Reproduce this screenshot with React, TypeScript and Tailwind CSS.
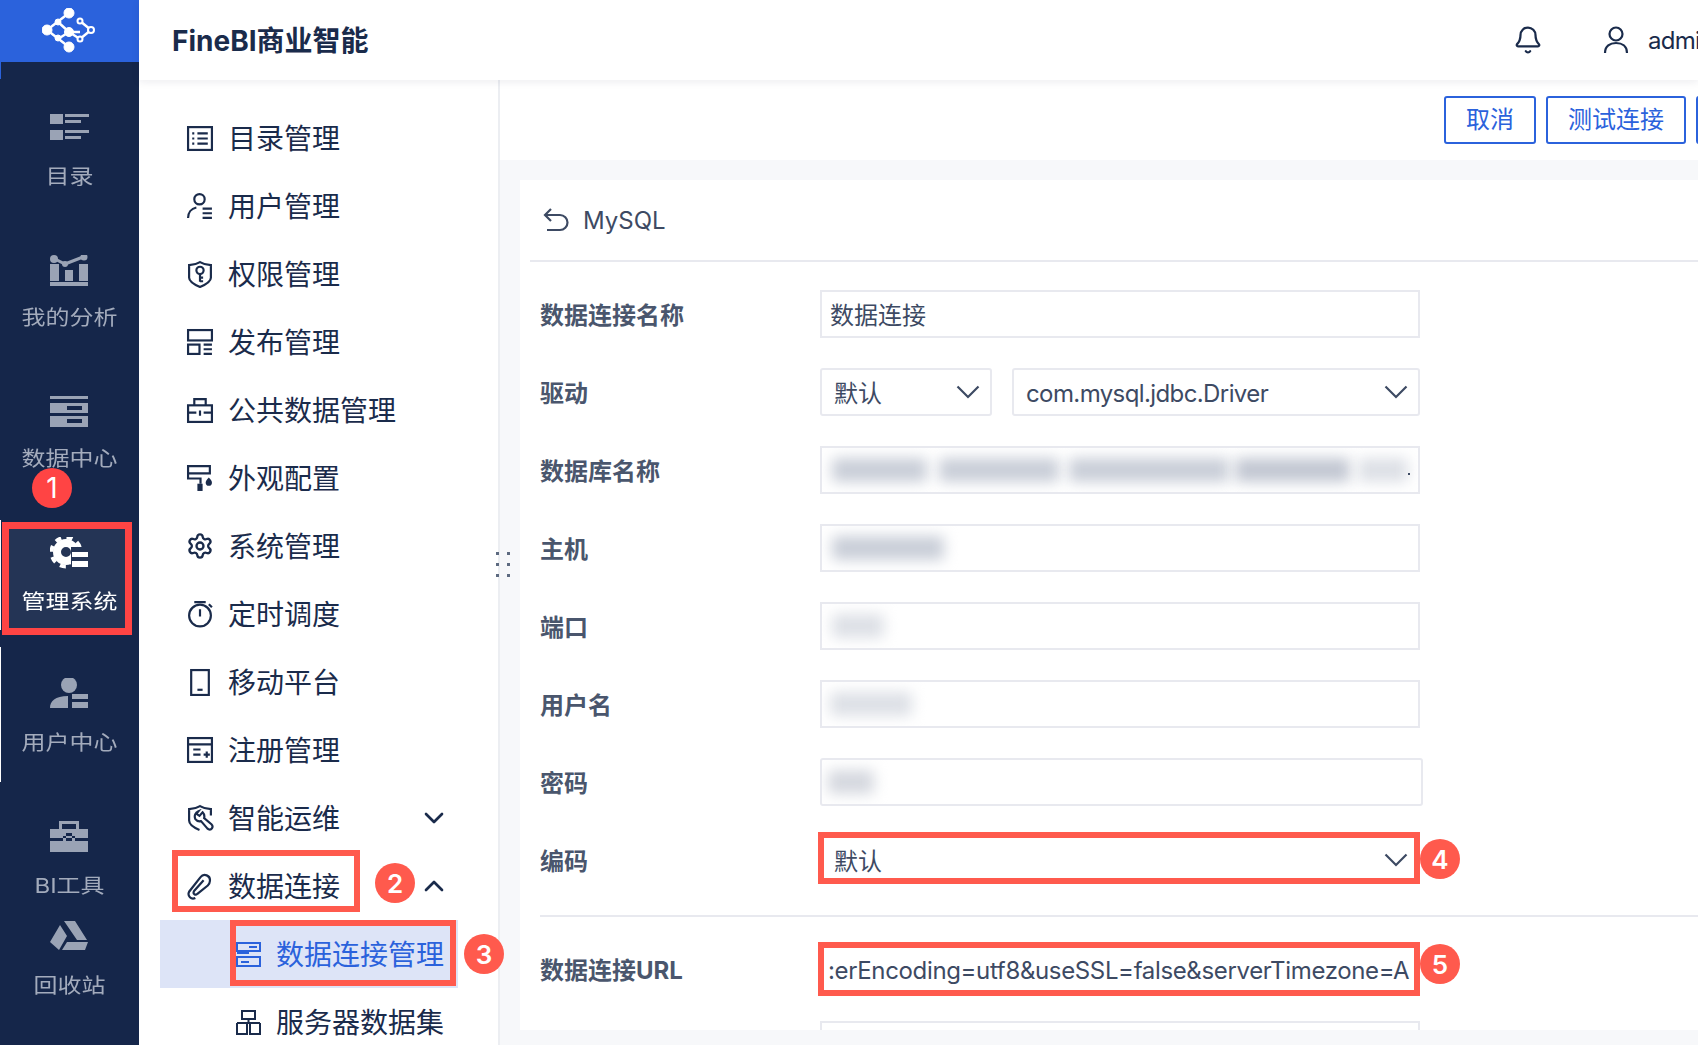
import type { ReactNode } from "react";
import { Bell, ChevronDown, ChevronUp, Settings } from "lucide-react";

const INK = "#1a2b4b";

function Ico({ children }: { children: ReactNode }) {
  return (
    <svg width="28" height="28" viewBox="0 0 27 27" fill="none" stroke={INK} strokeWidth="2.100" className="shrink-0">
      {children}
    </svg>
  );
}

const menu: { label: string; icon: ReactNode }[] = [
  {
    label: "目录管理",
    icon: (
      <Ico>
        <rect x="2" y="3" width="23" height="22" />
        <path d="M6 9h2M11 9h10M6 14h2M11 14h10M6 19h2M11 19h10" />
      </Ico>
    ),
  },
  {
    label: "用户管理",
    icon: (
      <Ico>
        <circle cx="13" cy="7" r="5" />
        <path d="M2 25c0-5 3-9 8-10M16 16h9M16 20.500h9M16 25h9" />
      </Ico>
    ),
  },
  {
    label: "权限管理",
    icon: (
      <Ico>
        <path d="M3 5c4 0 7-1 10.500-3 3.500 2 6.500 3 10.500 3v12c0 4-6 7-10.500 9C9 24 3 21 3 17z" />
        <circle cx="13.500" cy="10" r="3.500" />
        <path d="M13.500 13.500V21M13.500 17h3M13.500 20.500h3" />
      </Ico>
    ),
  },
  {
    label: "发布管理",
    icon: (
      <Ico>
        <rect x="2" y="2" width="23" height="10" />
        <rect x="2" y="16" width="11" height="9" />
        <path d="M17 16h8M17 20.500h8M17 25h8" />
      </Ico>
    ),
  },
  {
    label: "公共数据管理",
    icon: (
      <Ico>
        <rect x="2" y="9" width="23" height="16" />
        <path d="M8 9V3h11v6M2 16h8M17 16h8M13.500 14v5" />
      </Ico>
    ),
  },
  {
    label: "外观配置",
    icon: (
      <Ico>
        <path d="M2 11V2h21v7H2M2 11v3h12v5" />
        <rect x="11" y="19" width="5" height="7" fill={INK} stroke="none" />
        <path d="M22 13c2 2 3 3.500 3 5a3 3 0 0 1-6 0c0-1.500 1-3 3-5z" fill={INK} stroke="none" />
      </Ico>
    ),
  },
  { label: "系统管理", icon: <Settings size={28} color={INK} strokeWidth={2} className="shrink-0" /> },
  {
    label: "定时调度",
    icon: (
      <Ico>
        <circle cx="13.500" cy="15" r="10.500" />
        <path d="M13.500 9v7M8 2h11M22 4l3 3" />
      </Ico>
    ),
  },
  {
    label: "移动平台",
    icon: (
      <Ico>
        <rect x="5" y="2" width="17" height="24" />
        <path d="M11 21h5" />
      </Ico>
    ),
  },
  {
    label: "注册管理",
    icon: (
      <Ico>
        <rect x="2" y="2" width="23" height="23" />
        <path d="M2 8h23M7 13h7M7 18h7M17 18h6M20 15v6" />
      </Ico>
    ),
  },
  {
    label: "智能运维",
    icon: (
      <Ico>
        <path d="M24 11V5c-4 0-7-1-10.500-3C10 4 7 5 3 5v11c0 4 5 7 10 9" />
        <path d="M12 7a5.500 5.500 0 0 0-3 7.500c1.500 2 3.500 2.500 5.500 2l6 7c1.500 1.500 3.500 1.500 4.500 0s.5-3-.5-4l-7-6c.5-2 0-4-1.500-5.500l-3 3.500-3-2z" />
      </Ico>
    ),
  },
];

const rail: { label: string; icon: ReactNode; h: string; mt: string }[] = [
  {
    label: "目录",
    h: "h-[141px]",
    mt: "mt-[16px]",
    icon: (
      <path d="M0 0h13v10H0zM15 0h24v3H15zM15 6h16v3H15zM0 16h13v10H0zM15 16h24v3H15zM15 22h16v3H15z" />
    ),
  },
  {
    label: "我的分析",
    h: "h-[141px]",
    mt: "mt-[16px]",
    icon: (
      <>
        <path d="M3 3l12 6 18-7" fill="none" stroke="#9aa3b5" strokeWidth="3" />
        <circle cx="4" cy="4" r="4" />
        <circle cx="15" cy="9" r="3" />
        <circle cx="34" cy="2" r="3.500" />
        <path d="M0 9h9v17H0zM15 15h8v11h-8zM29 9h9v17h-9zM0 27h38v4H0z" />
      </>
    ),
  },
  {
    label: "数据中心",
    h: "h-[141px]",
    mt: "mt-[16px]",
    icon: <path d="M0 0h38v3H0zM0 7h38v10H0zM0 20h38v11H0z M17 10v4h15v-4z M17 23v4h15v-4z" fillRule="evenodd" />,
  },
  {
    label: "用户中心",
    h: "h-[143px]",
    mt: "mt-[18px]",
    icon: (
      <>
        <circle cx="19" cy="7" r="8" />
        <path d="M0 30c0-7 5-12 18-12v12zM22 16h16v5H22zM22 24h16v6H22z" />
      </>
    ),
  },
  {
    label: "BI工具",
    h: "h-[100px]",
    mt: "mt-[18px]",
    icon: (
      <path
        d="M9 8V0h20v8h9v9H0V8zM12 3v5h14V3zM0 20h13v-5h12v5h13v11H0zM16 12v8h6v-8z"
        fillRule="evenodd"
      />
    ),
  },
  {
    label: "回收站",
    h: "h-[100px]",
    mt: "mt-[18px]",
    icon: <path d="M14 0h11l12 19H27L14 0zM10 4l7 11-8 14-9-8zM17 21h21l-3 8H12z" />,
  },
];

function RailItem({ label, icon, h, mt, active }: { label: string; icon: ReactNode; h: string; mt: string; active?: boolean }) {
  return (
    <div className={`flex flex-col items-center ${h}`}>
      <svg width="39" height="32" viewBox="0 0 39 32" fill={active ? "#ffffff" : "#9aa3b5"} className="shrink-0">
        {icon}
      </svg>
      <div className={`${mt} scale-y-[0.85] text-[24px] leading-[30px] ${active ? "text-white" : "text-[#a3abbc]"}`}>
        {label}
      </div>
    </div>
  );
}

function Badge({ n, className }: { n: number; className: string }) {
  return (
    <div
      className={`absolute flex h-[40px] w-[40px] items-center justify-center rounded-full bg-[#ff5a4d] text-[26px] font-semibold text-white ${className}`}
    >
      {n}
    </div>
  );
}

function MenuRow({ label, icon, right }: { label: string; icon: ReactNode; right?: ReactNode }) {
  return (
    <div className="relative flex h-[68px] items-center gap-[14px] pl-[47px] text-[28px] text-[#1a2b4b]">
      {icon}
      <span className="pt-[2px]">{label}</span>
      {right}
    </div>
  );
}

function Chevron() {
  return (
    <svg width="24" height="14" viewBox="0 0 24 14" fill="none" stroke="#3d4a63" strokeWidth="2.200" className="shrink-0">
      <path d="M1.500 1.500L12 12 22.500 1.500" />
    </svg>
  );
}

function Blur({ w, ml = "ml-[10px]", tone = "bg-[#c9ced8]" }: { w: string; ml?: string; tone?: string }) {
  return <div className={`h-[24px] rounded-sm blur-[7px] ${w} ${ml} ${tone}`} />;
}

function Field({ label, children, drop = "pt-[3px]" }: { label: string; children: ReactNode; drop?: string }) {
  return (
    <div className="flex h-[48px] items-center">
      <div className={`w-[280px] shrink-0 text-[24px] font-bold text-[#4a566d] ${drop}`}>{label}</div>
      {children}
    </div>
  );
}

const inputCls = "relative flex h-[48px] w-[600px] items-center overflow-hidden border-2 border-[#e8e9ef]";
const textCls = "pt-[3px] text-[24px] text-[#3d4a63]";

function Select({ value, w, mono }: { value: string; w: string; mono?: boolean }) {
  return (
    <div className={`flex h-[48px] items-center justify-between rounded-[3px] border-2 border-[#e8e9ef] pl-[12px] pr-[10px] ${w}`}>
      <span className={`${textCls} ${mono ? "tracking-[-0.6px]" : ""}`}>{value}</span>
      <Chevron />
    </div>
  );
}

export default function App() {
  return (
    <div className="flex h-[1045px] w-[1698px] overflow-hidden bg-white font-[Inter,'Noto_Sans_CJK_SC',sans-serif]">
      <aside className="relative flex w-[139px] shrink-0 flex-col items-stretch bg-[#15264a]">
        <div className="flex h-[62px] items-center justify-center bg-[#2b62dc] pl-[2px] pt-[2px]">
          <svg width="58" height="48" viewBox="0 0 58 48" fill="#ffffff" stroke="#ffffff">
            <path d="M27 5L5 22l22 17M27 24l-11 7M16 14l11 10 11 0M38 13l11 9-11 9-11-7" strokeWidth="2.500" fill="none" />
            <circle cx="27" cy="5" r="5" />
            <circle cx="16" cy="14" r="3" />
            <circle cx="5" cy="22" r="5" />
            <circle cx="27" cy="24" r="4.500" />
            <circle cx="16" cy="30" r="3" />
            <circle cx="27" cy="39" r="5" />
            <circle cx="38" cy="13" r="2.500" fill="#2b62dc" strokeWidth="2" />
            <circle cx="49" cy="22" r="3" fill="#2b62dc" strokeWidth="2" />
            <circle cx="38" cy="31" r="2.500" fill="#2b62dc" strokeWidth="2" />
          </svg>
        </div>
        <div className="absolute left-0 top-[62px] h-[17px] w-[1px] bg-[#2b62dc]" />
        <div className="absolute left-0 top-[520px] h-[110px] w-[1px] bg-white" />
        <div className="absolute left-0 top-[647px] h-[135px] w-[1px] bg-white" />
        <div className="flex flex-col pt-[52px]">
          <RailItem {...rail[0]} />
          <RailItem {...rail[1]} />
          <RailItem {...rail[2]} />
          <div className="relative h-[141px]">
            <div className="absolute left-[2px] top-[-15px] h-[113px] w-[130px] border-[7px] border-[#ff4444] bg-[#243455]" />
            <div className="absolute left-[32px] top-[-69px] flex h-[40px] w-[40px] items-center justify-center rounded-full bg-[#ff4444] text-[28px] text-white">
              1
            </div>
            <div className="relative">
              <RailItem
                label="管理系统"
                h=""
                mt="mt-[18px]"
                active
                icon={
                  <>
                    <circle cx="16" cy="15" r="9" fill="none" stroke="#ffffff" strokeWidth="8" />
                    <circle cx="16" cy="15" r="14.500" fill="none" stroke="#ffffff" strokeWidth="4" strokeDasharray="6 5.400" />
                    <rect x="21" y="10" width="18" height="22" fill="#243455" />
                    <path d="M22 15h16v5H22zM22 24h16v6H22z" />
                  </>
                }
              />
            </div>
          </div>
          <RailItem {...rail[3]} />
          <RailItem {...rail[4]} />
          <RailItem {...rail[5]} />
        </div>
      </aside>

      <div className="flex min-w-0 flex-1 flex-col">
        <header className="relative z-10 flex h-[80px] shrink-0 items-center bg-white pl-[33px] shadow-[0_2px_8px_rgba(20,30,60,0.08)]">
          <div className="pt-[2px] text-[28px] font-bold text-[#1a2b4b]">FineBI商业智能</div>
          <div className="ml-auto flex items-center">
            <Bell size={30} color={INK} strokeWidth={1.800} />
            <svg width="26" height="30" viewBox="0 0 26 30" fill="none" stroke={INK} strokeWidth="2.200" className="ml-[60px]">
              <circle cx="13" cy="9" r="6.500" />
              <path d="M2 28c0-7 5-10 11-10s11 3 11 10" />
            </svg>
            <span className="ml-[19px] w-[50px] overflow-hidden whitespace-nowrap pt-[1px] text-[24px] tracking-[-0.7px] text-[#1a2b4b]">admin</span>
          </div>
        </header>

        <div className="flex min-h-0 flex-1">
          <nav className="relative w-[361px] shrink-0 border-r-2 border-[#eceef2] bg-white pt-[24px]">
            {menu.map((m) => (
              <MenuRow
                key={m.label}
                label={m.label}
                icon={m.icon}
                right={
                  m.label === "智能运维" ? (
                    <ChevronDown size={32} color={INK} strokeWidth={2} className="absolute left-[279px] top-[18px]" />
                  ) : undefined
                }
              />
            ))}
            <MenuRow
              label="数据连接"
              icon={
                <Ico>
                  <path d="M9 25c-4 2-8-2-6-6L14 5c3-4 10-2 9 4 0 2-1 3-2 4L11 21c-2 2-5 0-3-3l9-10" />
                </Ico>
              }
              right={
                <>
                  <div className="absolute left-[33px] top-[-2px] h-[62px] w-[188px] border-[6px] border-[#ff5a4d]" />
                  <Badge n={2} className="left-[236px] top-[11px]" />
                  <ChevronUp size={32} color={INK} strokeWidth={2} className="absolute left-[279px] top-[18px]" />
                </>
              }
            />
            <div className="relative ml-[21px] mr-[40px] flex h-[68px] items-center gap-[14px] bg-[#dde4f7] pl-[75px] text-[28px] text-[#2b62dc]">
              <svg width="27" height="27" viewBox="0 0 27 27" fill="none" stroke="#2b62dc" strokeWidth="2" className="shrink-0">
                <path d="M2 2h23v8H2zM2 12h12M2 16h23v9H2zM6 21h8M14 6h8" />
              </svg>
              <span className="pt-[2px]">数据连接管理</span>
              <div className="absolute left-[70px] top-0 h-[66px] w-[226px] border-[6px] border-[#ff5a4d]" />
              <Badge n={3} className="left-[304px] top-[14px]" />
            </div>
            <div className="flex h-[68px] items-center gap-[14px] pl-[96px] text-[28px] text-[#1a2b4b]">
              <svg width="27" height="27" viewBox="0 0 27 27" fill="none" stroke={INK} strokeWidth="2" className="shrink-0">
                <path d="M7 2h13v8H7zM2 14h23M13.500 10v4M2 14v11h10V14M15 14v11h10V14" />
              </svg>
              <span className="pt-[2px]">服务器数据集</span>
            </div>
            <div className="absolute right-[-12px] top-[472px] grid grid-cols-2 gap-x-[8px] gap-y-[8px]">
              {[0, 1, 2, 3, 4, 5].map((i) => (
                <div key={i} className="h-[3px] w-[3px] bg-[#5d6a80]" />
              ))}
            </div>
          </nav>

          <main className="flex min-w-0 flex-1 flex-col bg-[#f7f8fa]">
            <div className="flex h-[80px] shrink-0 items-center gap-[10px] bg-white pl-[944px]">
              <button className="h-[48px] w-[92px] shrink-0 rounded-[3px] border-2 border-[#2b62dc] text-[24px] text-[#2b62dc]">取消</button>
              <button className="h-[48px] w-[140px] shrink-0 rounded-[3px] border-2 border-[#2b62dc] text-[24px] text-[#2b62dc]">测试连接</button>
              <button className="h-[48px] w-[92px] shrink-0 rounded-[3px] border-2 border-[#2b62dc]" />
            </div>

            <section className="ml-[20px] mt-[20px] h-[850px] overflow-hidden bg-white">
              <div className="ml-[10px] flex h-[82px] items-center gap-[14px] border-b-2 border-[#e8e9ef] pl-[13px] text-[24px] text-[#3d4a63]">
                <svg width="26" height="26" viewBox="0 0 26 26" fill="none" stroke="#3d4a63" strokeWidth="2.200" className="shrink-0">
                  <path d="M8 2L2 8l6 6M2 8h15a7.500 7.500 0 0 1 0 15H4" />
                </svg>
                <span className="pt-[2px]">MySQL</span>
              </div>

              <div className="flex flex-col gap-[30px] pl-[20px] pt-[28px]">
                <Field label="数据连接名称">
                  <div className={`${inputCls} pl-[8px] ${textCls}`}>数据连接</div>
                </Field>
                <Field label="驱动">
                  <div className="flex gap-[20px]">
                    <Select value="默认" w="w-[172px]" />
                    <Select value="com.mysql.jdbc.Driver" w="w-[408px]" mono />
                  </div>
                </Field>
                <Field label="数据库名称">
                  <div className={inputCls}>
                    <Blur w="w-[95px]" />
                    <Blur w="w-[120px]" ml="ml-[12px]" />
                    <Blur w="w-[160px]" ml="ml-[10px]" />
                    <Blur w="w-[115px]" ml="ml-[6px]" tone="bg-[#c2c7d2]" />
                    <Blur w="w-[50px]" ml="ml-[8px]" tone="bg-[#dde0e6]" />
                    <span className="absolute right-[8px] top-[25px] h-[2px] w-[2px] bg-[#3d4a63]" />
                  </div>
                </Field>
                <Field label="主机">
                  <div className={inputCls}>
                    <Blur w="w-[112px]" ml="ml-[10px]" />
                  </div>
                </Field>
                <Field label="端口">
                  <div className={inputCls}>
                    <Blur w="w-[52px]" ml="ml-[10px]" tone="bg-[#dde0e6]" />
                  </div>
                </Field>
                <Field label="用户名">
                  <div className={inputCls}>
                    <Blur w="w-[82px]" ml="ml-[8px]" tone="bg-[#dde0e6]" />
                  </div>
                </Field>
                <Field label="密码">
                  <div className={`${inputCls} w-[603px] rounded-[3px]`}>
                    <Blur w="w-[46px]" ml="ml-[6px]" tone="bg-[#d5d8df]" />
                  </div>
                </Field>
                <Field label="编码">
                  <div className="relative flex h-[48px] w-[600px] items-center justify-between pl-[14px] pr-[12px]">
                    <span className={textCls}>默认</span>
                    <Chevron />
                    <div className="absolute left-[-2px] right-0 top-[-4px] h-[52px] border-[6px] border-[#ff5a4d]" />
                    <Badge n={4} className="left-[600px] top-[3px]" />
                  </div>
                </Field>
              </div>

              <div className="ml-[20px] mt-[31px] border-t-2 border-[#e8e9ef]" />

              <div className="pl-[20px] pt-[26px]">
                <Field label="数据连接URL" drop="pt-[7px]">
                  <div className="relative flex h-[48px] w-[600px] items-center pl-[8px]">
                    <span className="whitespace-nowrap pt-[7px] text-[24px] tracking-[-0.35px] text-[#3d4a63]">:erEncoding=utf8&amp;useSSL=false&amp;serverTimezone=A</span>
                    <div className="absolute left-[-2px] right-0 top-[-1px] h-[54px] border-[6px] border-[#ff5a4d]" />
                    <Badge n={5} className="left-[600px] top-[1px]" />
                  </div>
                </Field>
                <div className="ml-[280px] mt-[30px] h-[48px] w-[600px] border-2 border-[#e8e9ef]" />
              </div>
            </section>
          </main>
        </div>
      </div>
    </div>
  );
}
